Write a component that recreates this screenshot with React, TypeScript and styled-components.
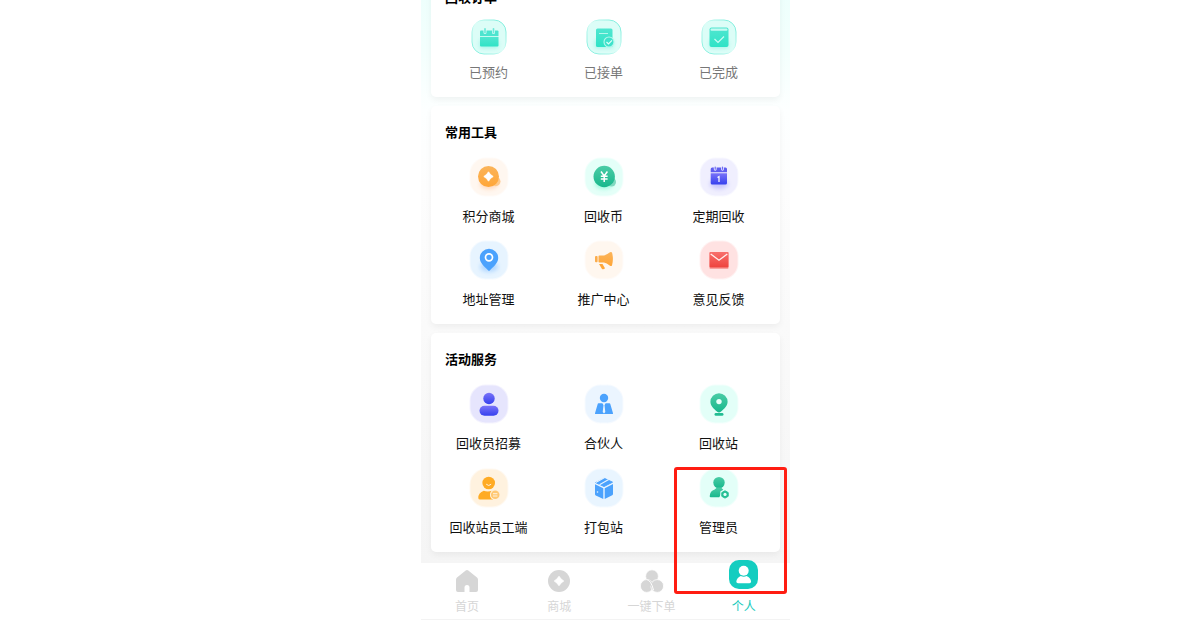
import React from 'react';
import styled, { createGlobalStyle } from 'styled-components';

const GlobalStyle = createGlobalStyle`
  *, *::before, *::after { box-sizing: border-box; }
  body {
    margin: 0;
    background: #fff;
    font-family: "Noto Sans CJK SC", "Noto Sans", sans-serif;
    color: #111;
  }
`;

const Page = styled.div`
  display: flex;
  justify-content: center;
  padding-left: 25px;
`;

const Phone = styled.div`
  position: relative;
  width: 100%;
  max-width: 369px;
  overflow: hidden;
`;

const Feed = styled.main`
  display: flex;
  flex-direction: column;
  gap: 9px;
  margin-top: -29px;
  padding: 0 10px 11px;
  background: linear-gradient(#ebfffc 0, #f3fffd 80px, #fdffff 140px, #fdfdfd 220px, #f9f9f9 400px, #f5f5f5 100%);
`;

const Card = styled.section`
  padding: 16px 4px 15px 0;
  border-radius: 5px;
  background: #fff;
  box-shadow: 0 3px 6px rgba(0, 0, 0, 0.05);
`;

const CardTitle = styled.h2<{ $compact?: boolean }>`
  margin: 0 0 ${p => (p.$compact ? 12 : 15)}px;
  padding-left: 14px;
  font-size: 13px;
  line-height: 20px;
  font-weight: 700;
  color: #000;
`;

const Grid = styled.div<{ $gap: number }>`
  display: grid;
  grid-template-columns: repeat(3, 1fr);
  row-gap: ${p => p.$gap}px;
`;

const Cell = styled.button<{ $muted?: boolean }>`
  display: flex;
  flex-direction: column;
  align-items: center;
  gap: ${p => (p.$muted ? 7 : 9)}px;
  padding: 0;
  border: 0;
  background: none;
  font: inherit;
  font-size: 13px;
  line-height: 20px;
  white-space: nowrap;
  color: ${p => (p.$muted ? '#777' : '#111')};
  cursor: pointer;
`;

const Icon = styled.svg<{ $size: number }>`
  display: block;
  width: ${p => p.$size}px;
  height: ${p => p.$size}px;
`;

const TabBar = styled.nav`
  display: grid;
  grid-template-columns: repeat(4, 1fr);
  border-bottom: 1px solid #f3f3f3;
  background: #fff;
`;

const Tab = styled.a<{ $active?: boolean }>`
  display: flex;
  flex-direction: column;
  align-items: center;
  justify-content: flex-end;
  gap: ${p => (p.$active ? 7 : 3)}px;
  height: 56px;
  padding-bottom: 3px;
  font-size: 12px;
  line-height: 20px;
  text-decoration: none;
  color: ${p => (p.$active ? '#14c9bb' : '#d6d6d6')};

  svg { flex: none; margin-top: -8px; }
`;

const Highlight = styled.div`
  position: absolute;
  right: 3px;
  bottom: 26px;
  width: 113px;
  height: 127px;
  border: 3px solid #ff1d12;
  border-radius: 3px;
  pointer-events: none;
`;

const Gradients = () => (
  <svg width="0" height="0" style={{ display: 'block' }} aria-hidden="true">
    <defs>
      {[
        ['mint', '#50e6d0', '#2fe3c6'],
        ['orange', '#fbb45a', '#ffa638'],
        ['green', '#4bcca6', '#18b88c'],
        ['violet', '#7a73f8', '#3540ee'],
        ['red', '#f8706c', '#ee433e'],
      ].map(([id, from, to]) => (
        <linearGradient key={id} id={id} x1="0" y1="0" x2="0" y2="1">
          <stop offset="0" stopColor={from} />
          <stop offset="1" stopColor={to} />
        </linearGradient>
      ))}
      <linearGradient id="rim" x1="0" y1="1" x2="1" y2="0">
        <stop offset="0" stopColor="#7deedd" />
        <stop offset=".3" stopColor="#a5f4e8" />
        <stop offset=".5" stopColor="#dcfdf7" />
        <stop offset=".7" stopColor="#a5f4e8" />
        <stop offset="1" stopColor="#6debd8" />
      </linearGradient>
      <filter id="soft" x="-50%" y="-50%" width="200%" height="200%">
        <feGaussianBlur stdDeviation="2" />
      </filter>
    </defs>
  </svg>
);

type TileProps = { bg: string; glow?: string; children: React.ReactNode };

const Tile = ({ bg, glow, children }: TileProps) => (
  <Icon $size={40} viewBox="0 0 40 40" aria-hidden="true">
    <rect x=".5" y=".5" width="39" height="39" rx="16" fill={bg} opacity=".45" />
    <rect x="1.5" y="1.5" width="37" height="37" rx="15" fill={bg} />
    {glow && <ellipse cx="20" cy="27" rx="9" ry="5" fill={glow} opacity=".3" filter="url(#soft)" />}
    {children}
  </Icon>
);

const MintTile = ({ children }: { children: React.ReactNode }) => (
  <Icon $size={36} viewBox="0 0 36 36" aria-hidden="true">
    <rect x="1" y="1" width="34" height="34" rx="12" fill="#dcfdf7" stroke="url(#rim)" strokeWidth="1" />
    <rect x="9" y="21" width="18" height="8" fill="#36e3ca" opacity=".35" filter="url(#soft)" />
    {children}
  </Icon>
);

const Booked = () => (
  <MintTile>
    <path d="M9 12.500a1 1 0 0 1 1-1h16.500a1 1 0 0 1 1 1V17H9z" fill="#4ce4cf" />
    <path d="M9 18h18.500v8.500a1 1 0 0 1-1 1H10a1 1 0 0 1-1-1z" fill="url(#mint)" />
    <path d="M9 17.500h18.500" stroke="#c4faf0" />
    <path d="M14 10.500v3M22.500 10.500v3" stroke="#dcfdf7" strokeWidth="3" strokeLinecap="round" />
    <path d="M14 9.800v3.700M22.500 9.800v3.700" stroke="#6eeadb" strokeWidth="1.700" strokeLinecap="round" />
  </MintTile>
);

const Accepted = () => (
  <MintTile>
    <rect x="10" y="9.500" width="16.500" height="18.500" rx="1.500" fill="url(#mint)" />
    <path d="M13 14.500h9" stroke="#b5f7ec" />
    <circle cx="23" cy="23" r="5" fill="#3ee2cb" stroke="#b8f8ed" strokeWidth="1.100" />
    <path d="m20.500 23 2 2 3.500-3.700" fill="none" stroke="#e0fffa" strokeWidth="1.200" />
  </MintTile>
);

const Done = () => (
  <MintTile>
    <rect x="8.500" y="8.500" width="19" height="19.500" rx="2" fill="url(#mint)" />
    <rect x="9.500" y="9.500" width="17" height="2.300" rx="1" fill="#c6faf2" />
    <path d="m13.500 20 3.500 3.500 6-6" fill="none" stroke="#c9fcf4" strokeWidth="1.200" />
  </MintTile>
);

const Points = () => (
  <Tile bg="#fff7f0" glow="#ff8e3c">
    <circle cx="26.800" cy="24.500" r="4.700" fill="#fdc98d" />
    <circle cx="19.500" cy="19.500" r="10.500" fill="url(#orange)" />
    <path d="M19.500 14.800q1.600 3.100 4.700 4.700-3.100 1.600-4.700 4.700-1.600-3.100-4.700-4.700 3.100-1.600 4.700-4.700z" fill="#fff" stroke="#fff" strokeWidth=".8" strokeLinejoin="round" />
  </Tile>
);

const RecycleCoin = () => (
  <Tile bg="#e4fff8" glow="#00f0a0">
    <circle cx="27.500" cy="25" r="4.500" fill="#80d9bf" />
    <circle cx="20.200" cy="19.500" r="10.700" fill="url(#green)" />
    <path d="m17 14.500 3.200 4.500 3.200-4.500M20.200 19v6M16.800 19.300h6.800M16.800 22h6.800" fill="none" stroke="#fff" strokeWidth="1.500" />
  </Tile>
);

const Schedule = () => (
  <Tile bg="#f0effe" glow="#6a66f6">
    <path d="M11.700 12a1.500 1.500 0 0 1 1.500-1.500h13.300A1.500 1.500 0 0 1 28 12v3.300H11.700z" fill="#5f5df0" />
    <path d="M11.700 16.200H28V26a1.500 1.500 0 0 1-1.500 1.500H13.200a1.500 1.500 0 0 1-1.500-1.500z" fill="url(#violet)" />
    <path d="M16.200 10.500v1.800M23.500 10.500v1.800" stroke="#f0effe" strokeWidth="2.800" strokeLinecap="round" />
    <path d="M16.200 10v2.200M23.500 10v2.200" stroke="#6f6df3" strokeWidth="1.200" strokeLinecap="round" />
    <path d="m18.500 20.500 1.500-1V25" fill="none" stroke="#fff" strokeWidth="1.200" />
  </Tile>
);

const Address = () => (
  <Tile bg="#e7f4ff" glow="#3b98ff">
    <path d="M20 8.700a9.200 9.200 0 0 1 9.200 9.200c0 5.200-5.400 9.200-8.200 12.300a1.300 1.300 0 0 1-2 0c-2.800-3.100-8.200-7.100-8.200-12.300A9.200 9.200 0 0 1 20 8.700z" fill="#4ba2fd" />
    <circle cx="20" cy="17.300" r="3.500" fill="#4ba2fd" stroke="#fff" strokeWidth="1.700" />
  </Tile>
);

const Promotion = () => (
  <Tile bg="#fff7ef">
    <rect x="11" y="16" width="2.600" height="6.200" rx="1" fill="#fbac4b" />
    <path d="M14.500 16.300q0-.8.800-.8H20q2.500-.5 6-3.200 1.200-.8 2 .2 1.800 6.500 0 13-.8 1-2 .3-3.500-2.800-6-3.300h-4.700q-.8 0-.8-.8z" fill="url(#orange)" />
    <path d="M15 24h3.500l2.500 4.300q-1.300 1.300-3 .7z" fill="#ffa638" />
  </Tile>
);

const Feedback = () => (
  <Tile bg="#ffe2e2">
    <rect x="10.500" y="12" width="19" height="17" rx="1" fill="#f9a19e" />
    <rect x="10.500" y="12" width="19" height="15.500" rx="1" fill="url(#red)" />
    <path d="m11.700 14 8.300 6.300 8.300-6.300" fill="none" stroke="#fff0ef" strokeWidth="1.300" />
  </Tile>
);

const Recruit = () => (
  <Tile bg="#e6e5fd">
    <circle cx="20" cy="14.500" r="5.700" fill="url(#violet)" />
    <rect x="10.500" y="21.800" width="19" height="10" rx="5" fill="url(#violet)" />
  </Tile>
);

const Partner = () => (
  <Tile bg="#ebf5ff">
    <circle cx="20" cy="14" r="4.200" fill="#4ba2fd" />
    <path d="M14.500 19.300h3.800l1.700 2 1.700-2h3.800q.6 0 .8.700l2.700 9.200q.2.900-.7.900H11.700q-.9 0-.7-.9L13.700 20q.2-.7.800-.7z" fill="#4ba2fd" />
    <path d="M18.800 19.300h2.400l-.7 1.700.8 7-1.300 1.500-1.300-1.500.8-7z" fill="#e8f4ff" />
  </Tile>
);

const Station = () => (
  <Tile bg="#e3fff8">
    <path d="M20 9.200a8.600 8.600 0 0 1 8.600 8.600c0 4.200-3.500 7.200-6.800 10a2.800 2.800 0 0 1-3.600 0c-3.300-2.800-6.800-5.800-6.800-10A8.600 8.600 0 0 1 20 9.200z" fill="url(#green)" />
    <circle cx="20" cy="17.600" r="2.700" fill="#e9fffa" />
    <rect x="15.500" y="29" width="9" height="2.800" rx="1.400" fill="#22bd92" />
  </Tile>
);

const Staff = () => (
  <Tile bg="#fff2df">
    <circle cx="19.700" cy="15" r="6.300" fill="#ffab24" />
    <path d="M17.500 16.500q2.200 2.300 4.400 0" fill="none" stroke="#fff2df" strokeWidth="1" strokeLinecap="round" />
    <path d="M9.300 30q0-5.500 5.500-7.300 3.500 1.500 8.500 0L24 31.500H11q-1.700 0-1.700-1.500z" fill="#ffab24" />
    <circle cx="26.200" cy="26.700" r="5.300" fill="#fff2df" />
    <circle cx="26.200" cy="26.700" r="4.300" fill="#ffc873" />
    <path d="M24 25.700h4.400M24 28h4.400" stroke="#fff2df" />
  </Tile>
);

const Packing = () => (
  <Tile bg="#e9f5ff">
    <path d="m20 10.200 8.500 4-8.500 4.300-8.500-4z" fill="#4ba2fd" stroke="#4ba2fd" strokeLinejoin="round" />
    <path d="m24.700 11.500-9.200 5.300M20.700 9.500l-9 5" stroke="#e9f5ff" strokeWidth="1.100" />
    <path d="m11 16.300 8.300 3.900V31l-7.500-3.500q-.8-.5-.8-1.500zM20.700 20.200l8.300-4.100v9.700q0 1-.8 1.500L20.700 31z" fill="#4ba2fd" />
    <circle cx="13.500" cy="24" r=".8" fill="#e9f5ff" />
  </Tile>
);

const Admin = () => (
  <Tile bg="#e3fff8">
    <circle cx="20" cy="14.600" r="5.700" fill="url(#green)" />
    <path d="M10.700 28.300q.3-5.500 5-6.800l2.300-2h4l2.300 2.300-4 7.500h-8.600q-1 0-1-1z" fill="url(#green)" />
    <path d="m26 20.800 4.700 2.700v5.600L26 31.800l-4.700-2.700v-5.600z" fill="#e3fff8" />
    <path d="m26 22.800 3.200 1.800v3.700L26 30.100l-3.200-1.800v-3.700z" fill="#25bf94" stroke="#25bf94" strokeLinejoin="round" />
    <circle cx="26" cy="26.400" r="1.600" fill="#e9fffa" />
  </Tile>
);

const HomeTab = () => (
  <Icon $size={24} viewBox="0 0 24 24" aria-hidden="true">
    <path d="M10.700 1.600q1.300-1 2.600 0l8.700 7q1 .9 1 2.200V21q0 2-2 2h-6.500v-4.500a2.500 2.500 0 0 0-5 0V23H3q-2 0-2-2V10.800q0-1.300 1-2.200z" fill="#d6d6d6" />
  </Icon>
);

const MallTab = () => (
  <Icon $size={24} viewBox="0 0 24 24" aria-hidden="true">
    <circle cx="12" cy="12" r="11" fill="#d6d6d6" />
    <path d="M12 7.300q1.700 3 4.700 4.700-3 1.700-4.700 4.700-1.700-3-4.700-4.700 3-1.700 4.700-4.700z" fill="#fff" stroke="#fff" strokeLinejoin="round" />
  </Icon>
);

const OrderTab = () => (
  <Icon $size={24} viewBox="0 0 24 24" aria-hidden="true">
    <g fill="#d6d6d6" stroke="#fff" strokeWidth=".8">
      <circle cx="12" cy="7.200" r="6.400" />
      <circle cx="6.800" cy="17" r="6.400" />
      <circle cx="17.200" cy="17" r="6.400" />
      <path d="M5 11q4-1.700 7 2.500l1 6-2-2-4-6z" stroke="none" />
      <path d="M6.500 10.500Q11 11 13.500 21" fill="none" strokeWidth="1" />
    </g>
  </Icon>
);

const MineTab = () => (
  <Icon $size={29} viewBox="0 0 29 29" aria-hidden="true">
    <rect width="29" height="29" rx="10" fill="#14cdc0" />
    <circle cx="14.700" cy="10.700" r="5" fill="#fff" />
    <path d="M7.300 21.500q.5-4 4.500-5.500 2.900 1.500 5.800 0 4 1.500 4.500 5.500 0 1.700-1.700 1.700H9q-1.700 0-1.700-1.700z" fill="#fff" />
  </Icon>
);

type Entry = { label: string; icon: React.ComponentType };

const orders: Entry[] = [
  { label: '已预约', icon: Booked },
  { label: '已接单', icon: Accepted },
  { label: '已完成', icon: Done },
];

const tools: Entry[] = [
  { label: '积分商城', icon: Points },
  { label: '回收币', icon: RecycleCoin },
  { label: '定期回收', icon: Schedule },
  { label: '地址管理', icon: Address },
  { label: '推广中心', icon: Promotion },
  { label: '意见反馈', icon: Feedback },
];

const services: Entry[] = [
  { label: '回收员招募', icon: Recruit },
  { label: '合伙人', icon: Partner },
  { label: '回收站', icon: Station },
  { label: '回收站员工端', icon: Staff },
  { label: '打包站', icon: Packing },
  { label: '管理员', icon: Admin },
];

const tabs: Entry[] = [
  { label: '首页', icon: HomeTab },
  { label: '商城', icon: MallTab },
  { label: '一键下单', icon: OrderTab },
  { label: '个人', icon: MineTab },
];

type PanelProps = { title: string; items: Entry[]; muted?: boolean; gap?: number };

const Panel = ({ title, items, muted, gap = 14 }: PanelProps) => (
  <Card>
    <CardTitle $compact={muted}>{title}</CardTitle>
    <Grid $gap={gap}>
      {items.map(({ label, icon: Glyph }) => (
        <Cell key={label} type="button" $muted={muted}>
          <Glyph />
          <span>{label}</span>
        </Cell>
      ))}
    </Grid>
  </Card>
);

export default function App() {
  return (
    <>
      <GlobalStyle />
      <Page>
        <Phone>
          <Gradients />
          <Feed>
            <Panel title="回收订单" items={orders} muted />
            <Panel title="常用工具" items={tools} />
            <Panel title="活动服务" items={services} gap={15} />
          </Feed>
          <TabBar>
            {tabs.map(({ label, icon: Glyph }) => (
              <Tab key={label} href="#" $active={label === '个人'} aria-current={label === '个人' ? 'page' : undefined}>
                <Glyph />
                <span>{label}</span>
              </Tab>
            ))}
          </TabBar>
          <Highlight />
        </Phone>
      </Page>
    </>
  );
}
